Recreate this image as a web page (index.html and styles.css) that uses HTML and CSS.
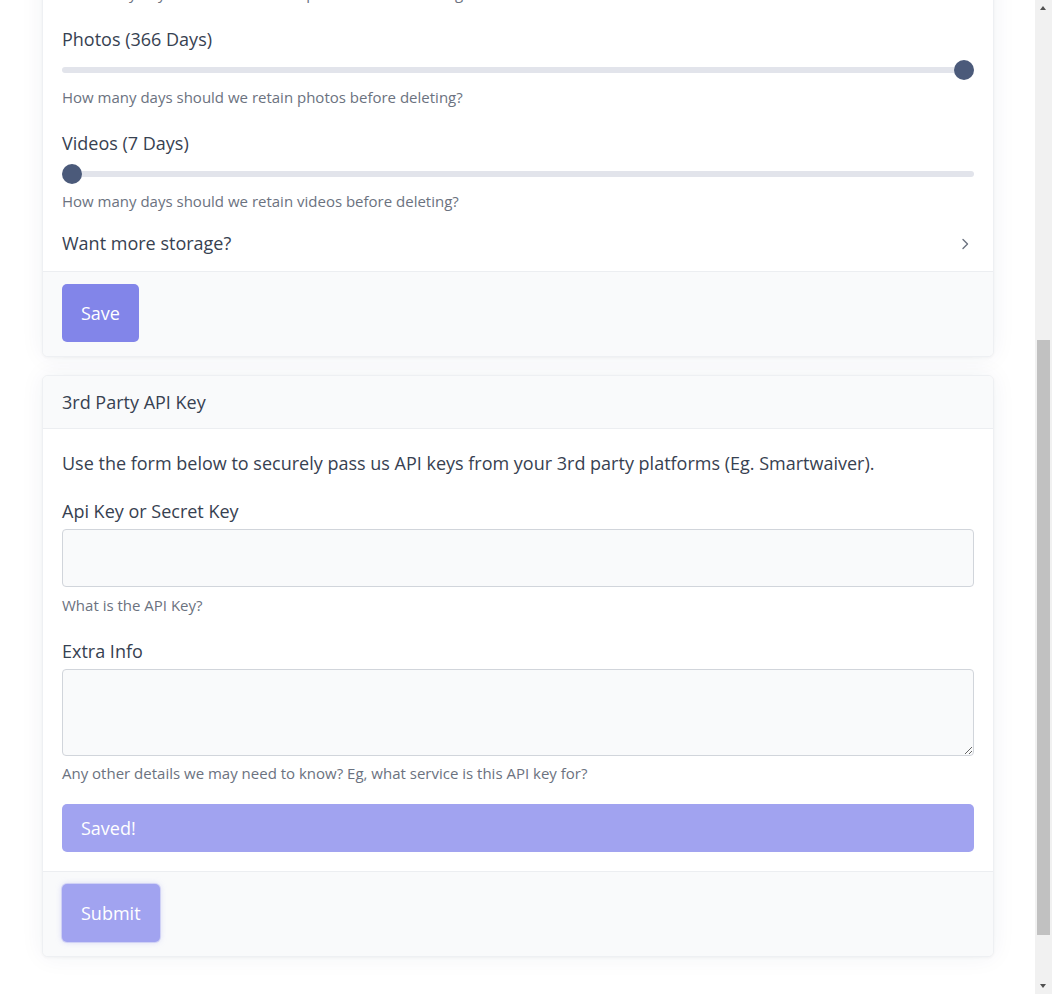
FILE: index.html
```html
<!DOCTYPE html>
<html lang="en">
<head>
<meta charset="utf-8">
<title>Settings</title>
<link rel="stylesheet" href="styles.css">
</head>
<body>
<div class="window">
  <main class="page">
    <section class="card">
      <div class="card-body">
        <div class="field">
          <label class="label">Audio (30 Days)</label>
          <input class="range" type="range" min="7" max="366" value="30">
          <p class="help">How many days should we retain uploads before deleting?</p>
        </div>
        <div class="field">
          <label class="label">Photos (366 Days)</label>
          <input class="range" type="range" min="7" max="366" value="366">
          <p class="help">How many days should we retain photos before deleting?</p>
        </div>
        <div class="field">
          <label class="label">Videos (7 Days)</label>
          <input class="range" type="range" min="7" max="366" value="7">
          <p class="help">How many days should we retain videos before deleting?</p>
        </div>
        <a class="more-row" href="#">
          <span>Want more storage?</span>
          <svg class="chevron" width="10" height="14" viewBox="0 0 10 14" aria-hidden="true"><path d="M3 2.5 L7.5 7 L3 11.5" fill="none" stroke="#6b7280" stroke-width="1.4" stroke-linecap="round" stroke-linejoin="round"/></svg>
        </a>
      </div>
      <div class="card-footer">
        <button class="btn btn-primary" type="button">Save</button>
      </div>
    </section>

    <section class="card">
      <div class="card-header">3rd Party API Key</div>
      <div class="card-body card-body--form">
        <p class="intro">Use the form below to securely pass us API keys from your 3rd party platforms (Eg. Smartwaiver).</p>
        <div class="field">
          <label class="label label--input" for="apikey">Api Key or Secret Key</label>
          <input class="input" id="apikey" type="text">
          <p class="help">What is the API Key?</p>
        </div>
        <div class="field field--last">
          <label class="label label--input" for="extra">Extra Info</label>
          <textarea class="input textarea" id="extra"></textarea>
          <p class="help help--tight">Any other details we may need to know? Eg, what service is this API key for?</p>
        </div>
        <div class="alert">Saved!</div>
      </div>
      <div class="card-footer">
        <button class="btn btn-muted" type="button">Submit</button>
      </div>
    </section>
  </main>
  <aside class="scrollbar" aria-hidden="true">
    <div class="sb-arrow sb-up"></div>
    <div class="sb-track">
      <div class="sb-thumb"></div>
    </div>
    <div class="sb-arrow sb-down"></div>
  </aside>
</div>
</body>
</html>
```
FILE: styles.css
```css
* { box-sizing: border-box; }

html, body {
  margin: 0;
  padding: 0;
  height: 994px;
  overflow: hidden;
  background: #ffffff;
}

body {
  font-family: "Open Sans", "Noto Sans", "Liberation Sans", sans-serif;
  color: #374151;
}

.window {
  display: flex;
  height: 994px;
  overflow: hidden;
}

.page {
  flex: 1;
  display: flex;
  flex-direction: column;
  gap: 18px;
  padding: 0 41px 0 42px;
  margin-top: -99px;
}

.card {
  background: #ffffff;
  border: 1px solid #eef0f3;
  border-radius: 6px;
  box-shadow: 0 0 24px rgba(40, 50, 110, 0.06), 0 1px 3px rgba(0, 0, 0, 0.04);
  overflow: hidden;
}

.card-header {
  background: #f9fafb;
  border-bottom: 1px solid #eceef1;
  padding: 13px 19px 12px;
  font-size: 18px;
  line-height: 27px;
  color: #374151;
}

.card-body {
  padding: 20px 19px 14px;
}

.card-body--form {
  padding: 21px 19px 19px;
}

.card-footer {
  background: #f9fafb;
  border-top: 1px solid #eceef1;
  padding: 12px 19px 14px;
}

.field {
  margin-bottom: 22px;
}

.field--last {
  margin-bottom: 20px;
}

.label {
  display: block;
  font-size: 18px;
  line-height: 27px;
  color: #374151;
  margin-bottom: 7px;
}

.label--input {
  margin-bottom: 4px;
}

.help {
  margin: 6px 0 0;
  font-size: 15px;
  line-height: 22px;
  color: #6b7280;
}

.input + .help {
  margin-top: 7px;
}

.textarea + .help--tight {
  margin-top: 6px;
}

.range {
  -webkit-appearance: none;
  appearance: none;
  display: block;
  width: 100%;
  height: 20px;
  margin: 0;
  background: transparent;
}

.range::-webkit-slider-runnable-track {
  height: 6px;
  border-radius: 3px;
  background: #e2e4eb;
}

.range::-webkit-slider-thumb {
  -webkit-appearance: none;
  appearance: none;
  width: 20px;
  height: 20px;
  border-radius: 50%;
  background: #4b5a7a;
  border: none;
  margin-top: -7px;
}

.more-row {
  display: flex;
  align-items: center;
  justify-content: space-between;
  margin-top: -4px;
  font-size: 18px;
  line-height: 27px;
  color: #374151;
  text-decoration: none;
  padding-right: 4px;
}

.chevron {
  display: block;
}

.intro {
  margin: 0 0 21px;
  font-size: 18px;
  line-height: 27px;
  color: #374151;
}

.input {
  display: block;
  width: 100%;
  height: 58px;
  margin: 0;
  background: #f9fafb;
  border: 1px solid #d1d5db;
  border-radius: 4px;
  font-family: inherit;
  font-size: 18px;
  padding: 8px 12px;
  color: #374151;
}

.textarea {
  height: 87px;
  resize: vertical;
}

.alert {
  height: 48px;
  display: flex;
  align-items: center;
  padding: 0 19px;
  background: #a1a3f0;
  border-radius: 5px;
  color: #ffffff;
  font-size: 18px;
}

.btn {
  display: block;
  height: 58px;
  padding: 0 19px;
  border: none;
  border-radius: 5px;
  font-family: inherit;
  font-size: 18px;
  color: #ffffff;
  cursor: pointer;
}

.btn-primary {
  background: #8285e9;
}

.btn-muted {
  background: #a1a3f0;
  box-shadow: 0 0 0 1px rgba(161, 163, 240, 0.35), 0 0 6px rgba(161, 163, 240, 0.4);
}

.scrollbar {
  flex: 0 0 17px;
  width: 17px;
  height: 994px;
  background: #f1f1f1;
  display: flex;
  flex-direction: column;
}

.sb-arrow {
  flex: 0 0 17px;
  position: relative;
}

.sb-up::after,
.sb-down::after {
  content: "";
  position: absolute;
  left: 5px;
  width: 0;
  height: 0;
  border-left: 3.5px solid transparent;
  border-right: 3.5px solid transparent;
}

.sb-up::after {
  top: 6px;
  border-bottom: 4px solid #505050;
}

.sb-down::after {
  top: 7px;
  border-top: 4px solid #505050;
}

.sb-track {
  flex: 1;
  padding: 323px 2px 42px;
  display: flex;
}

.sb-thumb {
  flex: 1;
  background: #c1c1c1;
}
```
